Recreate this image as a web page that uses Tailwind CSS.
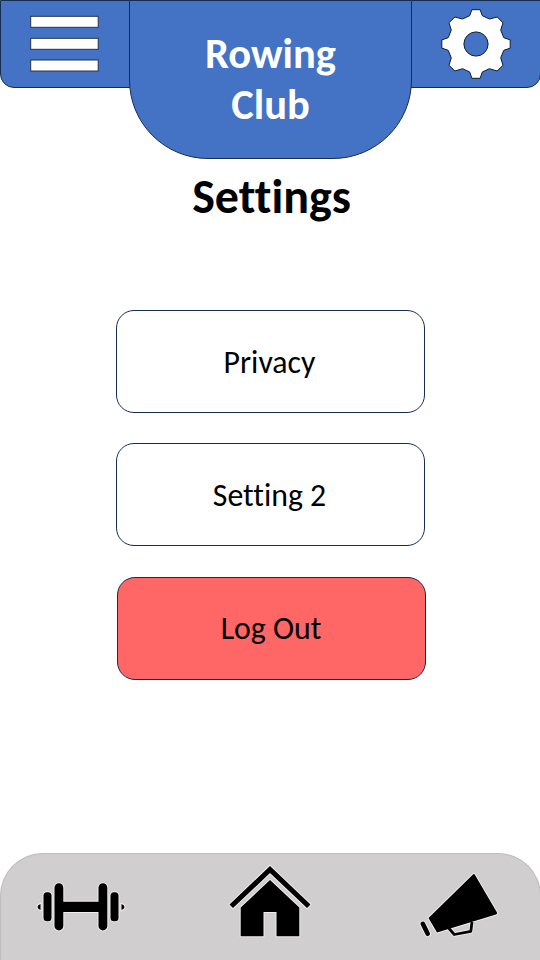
<!DOCTYPE html>
<html lang="en">
<head>
<meta charset="utf-8">
<title>Rowing Club - Settings</title>
<script src="https://cdn.jsdelivr.net/npm/@tailwindcss/browser@4"></script>
</head>
<body class="bg-white">
<div class="flex h-[960px] w-[540px] flex-col overflow-hidden bg-white font-[Carlito,Lato,sans-serif] text-black [font-variant-ligatures:none]">
  <header class="flex h-[159px] shrink-0 items-start">
    <button class="-mr-1.5 flex h-[88px] w-[135px] shrink-0 rounded-bl-[14px] border border-[#172c51] bg-[#4472c4] pl-[29px] pt-[14px]" aria-label="Menu">
      <svg class="h-[58px] w-[70px]" viewBox="0 0 70 58" fill="#fff" stroke="#24324d" stroke-width="1">
        <rect x="0.7" y="1.3" width="67.5" height="11"/>
        <rect x="0.7" y="23.3" width="67.5" height="11"/>
        <rect x="0.7" y="45" width="67.5" height="11"/>
      </svg>
    </button>
    <div class="relative z-10 flex h-[159px] w-[283px] shrink-0 flex-col items-center rounded-b-[79px] border border-[#172c51] bg-[#4472c4] pt-[26.500px] text-[42.5px] font-bold leading-[51px] text-white">
      <span>Rowing</span>
      <span>Club</span>
    </div>
    <button class="-ml-1.5 flex h-[88px] w-[135px] shrink-0 rounded-br-[14px] border border-[#172c51] bg-[#4472c4] pl-[33px] pt-[7px]" aria-label="Settings">
      <svg class="h-[72px] w-[72px]" viewBox="-36 -36 72 72" fill="#fff" stroke="#111c30" stroke-width="1" stroke-linejoin="round">
        <path fill-rule="evenodd" d="M-4.1-34.300H4.1L6.3-28.300L13.400-25L21.2-27L27-21.200L24.700-13.800L27.800-6.3L34.200-4.1V4.1L27.800 6.3L24.700 13.800L27 21.200L21.2 27L13.400 24.700L6.3 28L4.1 34.300H-4.1L-6.3 28L-13.400 24.700L-21.2 27L-27 21.200L-24.700 13.800L-27.800 6.3L-34.200 4.1V-4.1L-27.800-6.3L-24.700-13.800L-27-21.200L-21.2-27L-13.400-25L-6.3-28.300ZM12.1 0A12.1 12.1 0 1 0-12.1 0A12.1 12.1 0 1 0 12.1 0Z"/>
      </svg>
    </button>
  </header>

  <main class="flex flex-1 flex-col items-center">
    <h1 class="ml-[3px] mt-[12px] h-[52px] text-[48px] font-bold leading-[52px]">Settings</h1>
    <div class="ml-px mt-[87px] flex w-[310px] flex-col text-[31.8px]">
      <button class="flex h-[103px] w-[309px] items-center justify-center rounded-[18px] border border-[#172c51] pr-px pt-[2px]"><span>Privacy</span></button>
      <button class="mt-[30px] flex h-[103px] w-[309px] items-center justify-center rounded-[18px] border border-[#172c51] pr-px pt-[2px]"><span>Setting 2</span></button>
      <button class="ml-px mt-[31px] flex h-[103px] w-[309px] items-center justify-center rounded-[18px] border border-[#172c51] bg-[#ff6666]"><span>Log Out</span></button>
    </div>
  </main>

  <nav class="flex h-[107px] w-[541px] shrink-0 items-start rounded-t-[43px] border border-b-0 border-[#bdbbbb] bg-[#d0cece] pl-[34px] pt-[9px]">
    <svg class="mt-[17px] h-[54px] w-[92px]" viewBox="35 880 92 54" fill="#000" stroke="#efeded" stroke-width="2" paint-order="stroke">
      <path d="M40.5 904Q37.5 905 37.5 907T40.5 910ZM121.5 904Q124.5 905 124.5 907T121.5 910Z"/>
      <rect x="43.5" y="892.3" width="8" height="29" rx="3.500"/>
      <rect x="110.5" y="892.3" width="8" height="29" rx="3.500"/>
      <path d="M58.9 883.3a4.4 4.4 0 0 1 4.4 4.4V901.700H98.500V887.700a4.4 4.4 0 0 1 8.8 0V926a4.4 4.4 0 0 1-8.8 0V912H63.300V926a4.4 4.4 0 0 1-8.8 0V887.700a4.4 4.4 0 0 1 4.4-4.4Z"/>
    </svg>
    <svg class="ml-[100px] h-[80px] w-[86px]" viewBox="227 863 86 80" fill="#000" stroke="#efeded" stroke-width="2" paint-order="stroke">
      <path d="M270 866L310.5 904.5L307 908L270 873L233 908L229.500 904.5Z"/>
      <path d="M270 880L299.300 907.500V936.300H276.500V912H263.500V936.300H240.700V907.500Z"/>
    </svg>
    <svg class="ml-[105px] mt-[8px] h-[68px] w-[84px]" viewBox="418 871 84 68" fill="#000" stroke="#efeded" stroke-width="2" paint-order="stroke" stroke-linejoin="round">
      <path d="M449 928.500L454.300 934.500L470.800 931.300L472 922" fill="none" stroke="#efeded" stroke-width="4.500"/>
      <path d="M473 874.500Q474.200 873.500 475 875L497 912.500Q497.500 914 496 914.500L437 932.500L428.500 918Z"/>
      <path d="M449 928.500L454.300 934.500L470.800 931.300L472 922" fill="none" stroke="#000" stroke-width="2.800"/>
      <path d="M422.800 923.800L427.700 933.800" fill="none" stroke-width="6.500" stroke-linecap="round"/>
      <path d="M422.800 923.800L427.700 933.800" fill="none" stroke="#000" stroke-width="4.600" stroke-linecap="round"/>
    </svg>
  </nav>
</div>
</body>
</html>
